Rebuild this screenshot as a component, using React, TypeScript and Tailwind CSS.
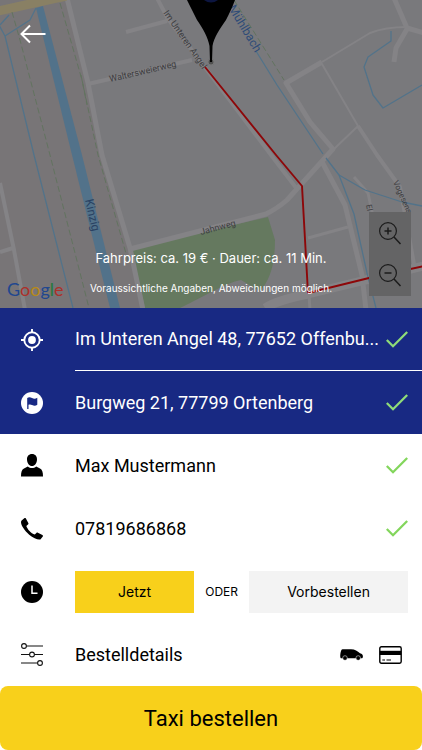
import React, { useState } from 'react';

// --- Types & Constants ---

type IconProps = { className?: string };

const ADDRESSES = [
  { id: 'pickup', value: 'Im Unteren Angel 48, 77652 Offenbu...' },
  { id: 'destination', value: 'Burgweg 21, 77799 Ortenberg' },
];

// --- Icons ---

const BackIcon = () => (
  <svg viewBox="0 0 26 20" className="w-[26px] h-5" fill="none" stroke="#fff" strokeWidth="2">
    <path d="M25.500 10H2M10 1.500L1.500 10L10 18.500" />
  </svg>
);

const CheckIcon = ({ className = '' }: IconProps) => (
  <svg viewBox="0 0 22 17" className={`w-[22px] h-[17px] shrink-0 ${className}`} fill="none" strokeWidth="2.300">
    <path d="M0.800 9L7 15.200L21.200 1" />
  </svg>
);

const TargetIcon = () => (
  <svg viewBox="0 0 22 22" className="size-[22px]" fill="none" stroke="#fff" strokeWidth="1.900">
    <circle cx="11" cy="11" r="7.700" />
    <circle cx="11" cy="11" r="3.900" fill="#fff" stroke="none" />
    <path d="M11 0V3.500M11 18.500V22M0 11H3.500M18.500 11H22" />
  </svg>
);

const FlagIcon = () => (
  <svg viewBox="0 0 22 22" className="size-[22px]">
    <circle cx="11" cy="11" r="11" fill="#fff" />
    <path d="M6.200 17V5.900C8 4.700 9.500 5.200 11 6C12.800 6.900 14.500 6.900 16.300 5.800V12.800C14.500 14 12.800 13.800 11 12.900C9.800 12.300 8.700 12.200 7.500 12.700V17Z" fill="#182983" />
  </svg>
);

const PersonIcon = () => (
  <svg viewBox="0 0 22 23" className="w-[22px] h-[23px]">
    <path d="M11 0C14.200 0 16.200 2.300 16 5.700C15.800 9.300 13.800 12 11 12C8.200 12 6.200 9.300 6 5.700C5.800 2.300 7.800 0 11 0Z" />
    <path d="M0 22.500C0 18 0.800 15.500 3 14.500L6.800 12.400C9.300 14.600 12.700 14.600 15.200 12.400L19 14.500C21.200 15.500 22 18 22 22.500Z" />
  </svg>
);

const PhoneIcon = () => (
  <svg viewBox="0 0 22 22" className="size-[22px]">
    <path d="M0.600 2.600L3.300 0.300C3.800-0.100 4.500 0 4.900 0.500L7.300 5C7.600 5.500 7.500 6.100 7 6.500L5.300 8C6.500 11.500 10 15.200 13.800 16.600L15.400 14.900C15.800 14.500 16.400 14.400 16.900 14.700L21.400 17.100C22 17.400 22.100 18.100 21.800 18.600L19.400 21.400C17.500 22.300 12.500 20.400 8.200 16.700C3.100 12.300-0.600 6.400 0.100 3.500Z" />
  </svg>
);

const ClockIcon = () => (
  <svg viewBox="0 0 22 22" className="size-[22px]">
    <circle cx="11" cy="11" r="11" />
    <path d="M11 4.500V12.200H16.500" fill="none" stroke="#fff" strokeWidth="1.500" />
  </svg>
);

const SlidersIcon = () => (
  <svg viewBox="0 0 22 23" className="w-[22px] h-[23px]" fill="none" stroke="#111" strokeWidth="1.100">
    <path d="M5.500 3H22M0 11.500H8.500M13.500 11.500H22M0 20H16.500" />
    <circle cx="3" cy="3" r="2.400" />
    <circle cx="11" cy="11.500" r="2.400" />
    <circle cx="19" cy="20" r="2.400" />
  </svg>
);

const VanIcon = () => (
  <svg viewBox="0 0 23 12" className="w-[23px] h-3">
    <path d="M1.300 1.300C1.600 0.500 2.200 0.200 3.200 0.200H11C15 0.300 17.500 1.800 20 4.200C22.200 4.900 23 5.800 22.900 7.500C22.900 8.700 22.500 9.200 21.500 9.300H0.800C0 8.500 0 4.500 1.300 1.300Z" />
    <circle cx="5" cy="9" r="2.300" stroke="#fff" strokeWidth="0.500" />
    <circle cx="18.200" cy="9" r="2.300" stroke="#fff" strokeWidth="0.500" />
  </svg>
);

const CardIcon = () => (
  <svg viewBox="0 0 23 18" className="w-[23px] h-[18px]">
    <rect x="0.800" y="0.800" width="21.400" height="16.400" rx="1.600" fill="#fff" stroke="#000" strokeWidth="1.400" />
    <path d="M0.800 4.800H22.200V9H0.800Z" />
    <path d="M3.300 14H6M7.500 14H12" stroke="#000" strokeWidth="1.200" />
  </svg>
);

const MagnifierIcon = ({ plus = false }: { plus?: boolean }) => (
  <svg viewBox="0 0 22 23" className="w-[22px] h-[23px]" fill="none" stroke="#1b1b1b" strokeWidth="1.200">
    <circle cx="9" cy="9" r="8.400" />
    <path d="M15 15L21.500 22" strokeWidth="1.500" />
    <path d={plus ? 'M5.500 9H12.500M9 5.500V12.500' : 'M5.500 9H12.500'} strokeWidth="1.500" />
  </svg>
);

// --- Map ---

const RouteMap = () => (
  <svg
    viewBox="0 0 422 308"
    preserveAspectRatio="xMidYMid slice"
    className="absolute inset-0 size-full font-[Roboto,sans-serif]"
    fill="none"
    strokeLinejoin="round"
  >
    <rect width="422" height="308" fill="#79797c" />
    <path d="M0 0H66L88 83L102 155L130 248L143 308H0Z" fill="#787577" />

    {/* Park */}
    <path d="M132 250L199 233L268 217L275 240C275 262 271 279 260 291L241 280C225 283 205 296 180 308H145Z" fill="#65795f" />

    {/* Streets */}
    <g stroke="#848386" strokeWidth="5">
      <path d="M67 -2L88 83L102 155L130 248L143 310" />
      <path d="M88 84L192 60M126 32L167 21" strokeWidth="4" />
      <path d="M157 -2L168 19L207 70L271 155L297 189" strokeWidth="4" />
      <path d="M130 249L200 231L266 214Q278 208 287 200L333 149L310 122L286 83L322 62" />
      <path d="M322 62L370 33Q385 27 407 27" strokeWidth="2" />
      <path d="M322 64L358 126L333 150" strokeWidth="2" />
      <path d="M358 126L377 155L400 187L414 264" strokeWidth="4" />
      <path d="M394 -2L407 28L424 33M407 29L396 48L394 62" />
      <path d="M321 160L345 205L362 275L366 310" />
      <path d="M308 238L348 227M309 295L310 310" strokeWidth="3" />
      <path d="M354 177L368 193L378 240" strokeWidth="3" />
      <path d="M265 308Q278 300 308 294L424 266" strokeWidth="9" />
      <path d="M0 183L14 250L25 310M0 252L13 248" strokeWidth="4" />
    </g>
    <path d="M-2 11L66 -4" stroke="#898064" strokeWidth="9" />

    {/* Footpaths */}
    <g stroke="#62735f" strokeWidth="1" strokeDasharray="6 3">
      <path d="M12 12L20 40L50 155L89 308" />
      <path d="M60 3L82 80L98 155L129 264" />
      <path d="M234 0L284 80M81 75L87 105" />
    </g>

    {/* Water */}
    <path d="M36 8L43 6L82 155L120 308H110L72 155Z" fill="#52728a" />
    <g stroke="#52738a" strokeWidth="1.300">
      <path d="M-1 25L5 36L34 155L73 308M5 36L30 20L36 8M0 25L9 15" />
      <path d="M256 51L277 85L323 154M326 158L339 175L354 214L367 273L376 308" />
      <path d="M339 175L365 190L402 202L422 206" />
      <path d="M391 31V41L368 57L364 67L373 95L383 108L422 85" />
    </g>

    {/* Street names */}
    <g fontSize="9" fill="#3d3d3f" stroke="none">
      <text transform="translate(110 82) rotate(-13)">Waltersweierweg</text>
      <text transform="translate(163 13) rotate(55)">Im Unteren Angel</text>
      <text transform="translate(201 235) rotate(-15)">Jahnweg</text>
      <text transform="translate(393 182) rotate(66)" fontSize="8">Vogesens</text>
      <text transform="translate(366 205) rotate(78)" fontSize="8">El</text>
    </g>
    <text transform="translate(228 8) rotate(59)" fontSize="12" fill="#2f4c78">Mühlbach</text>
    <text transform="translate(85 200) rotate(77)" fontSize="12" fill="#2a4263">Kinzig</text>

    {/* Route */}
    <path d="M205 67L276 155L302 186L308 293L369 278L424 266" stroke="#8d0709" strokeWidth="1.900" />
    <circle cx="211" cy="62" r="3" fill="#505050" stroke="#777" strokeWidth="1" />
    <path d="M187 0C191 8 194 14 197 20C203 29 208 37 209.500 46L210 62H212L212.500 46C214 37 220 29 226 20C229 14 232 8 235 0Z" fill="#000" />
    <path d="M204 0Q211 5 218 0Z" fill="#0c1540" />

    <text x="7" y="296" fontSize="18" style={{ fontFamily: 'Lato, sans-serif' }}>
      <tspan fill="#21478f">G</tspan>
      <tspan fill="#ac302a">o</tspan>
      <tspan fill="#b88917">o</tspan>
      <tspan fill="#21478f">g</tspan>
      <tspan fill="#237a3c">l</tspan>
      <tspan fill="#ac302a">e</tspan>
    </text>
  </svg>
);

// --- Components ---

const Row = ({ icon, label, dark = false, divider = false }: { icon: React.ReactNode; label: string; dark?: boolean; divider?: boolean }) => (
  <button type="button" className="flex h-[63px] w-full items-center pl-[21px] text-left">
    <span className="flex w-[54px] shrink-0">{icon}</span>
    <span className={`flex h-full min-w-0 flex-1 items-center gap-1 pr-3.5 ${divider ? 'border-b border-white' : ''}`}>
      <span className="flex-1 truncate text-[18px] leading-6 font-[Roboto,sans-serif]">{label}</span>
      <CheckIcon className={dark ? 'stroke-[#8fdc78]' : 'stroke-[#83d65c]'} />
    </span>
  </button>
);

export default function App() {
  const [time, setTime] = useState<'now' | 'later'>('now');

  return (
    <main className="flex min-h-screen flex-col bg-white text-black font-[Inter,sans-serif]">
      {/* Map */}
      <section className="relative flex min-h-[300px] flex-1 flex-col justify-between overflow-hidden">
        <RouteMap />
        <button type="button" aria-label="Zurück" className="relative mt-6 ml-5 self-start">
          <BackIcon />
        </button>
        <div className="absolute right-[11px] bottom-3 flex h-[84px] w-[42px] flex-col bg-[#646465]">
          <button type="button" aria-label="Vergrößern" className="flex flex-1 items-center justify-center"><MagnifierIcon plus /></button>
          <button type="button" aria-label="Verkleinern" className="flex flex-1 items-center justify-center"><MagnifierIcon /></button>
        </div>
        <div className="relative pb-3 text-center text-white pointer-events-none">
          <p className="text-[13px] leading-5">Fahrpreis: ca. 19 € · Dauer: ca. 11 Min.</p>
          <p className="mt-3 text-[10px] leading-4">Voraussichtliche Angaben, Abweichungen möglich.</p>
        </div>
      </section>

      {/* Addresses */}
      <section className="bg-[#182983] text-white">
        <Row icon={<TargetIcon />} label={ADDRESSES[0].value} dark divider />
        <Row icon={<FlagIcon />} label={ADDRESSES[1].value} dark />
      </section>

      {/* Customer */}
      <section>
        <Row icon={<PersonIcon />} label="Max Mustermann" />
        <Row icon={<PhoneIcon />} label="07819686868" />
      </section>

      {/* Pickup time */}
      <div className="flex h-[63px] items-center pl-[21px] pr-3.5 text-sm">
        <span className="w-[54px] shrink-0"><ClockIcon /></span>
        <button
          type="button"
          onClick={() => setTime('now')}
          className={`h-[42px] flex-3 ${time === 'now' ? 'bg-[#f8d01b]' : 'bg-[#f3f3f3]'}`}
        >
          Jetzt
        </button>
        <span className="w-[55px] shrink-0 text-center text-xs">ODER</span>
        <button
          type="button"
          onClick={() => setTime('later')}
          className={`h-[42px] flex-4 ${time === 'later' ? 'bg-[#f8d01b]' : 'bg-[#f3f3f3]'}`}
        >
          Vorbestellen
        </button>
      </div>

      {/* Order details */}
      <button type="button" className="flex h-[63px] items-center pl-[21px] pr-5 text-left">
        <span className="w-[54px] shrink-0"><SlidersIcon /></span>
        <span className="flex-1 text-[18px] leading-6 font-[Roboto,sans-serif]">Bestelldetails</span>
        <span className="flex items-center gap-4">
          <VanIcon />
          <CardIcon />
        </span>
      </button>

      <button type="button" className="h-16 shrink-0 rounded-lg bg-[#f8d01b] text-[22px] font-[Roboto,sans-serif]">
        Taxi bestellen
      </button>
    </main>
  );
}
